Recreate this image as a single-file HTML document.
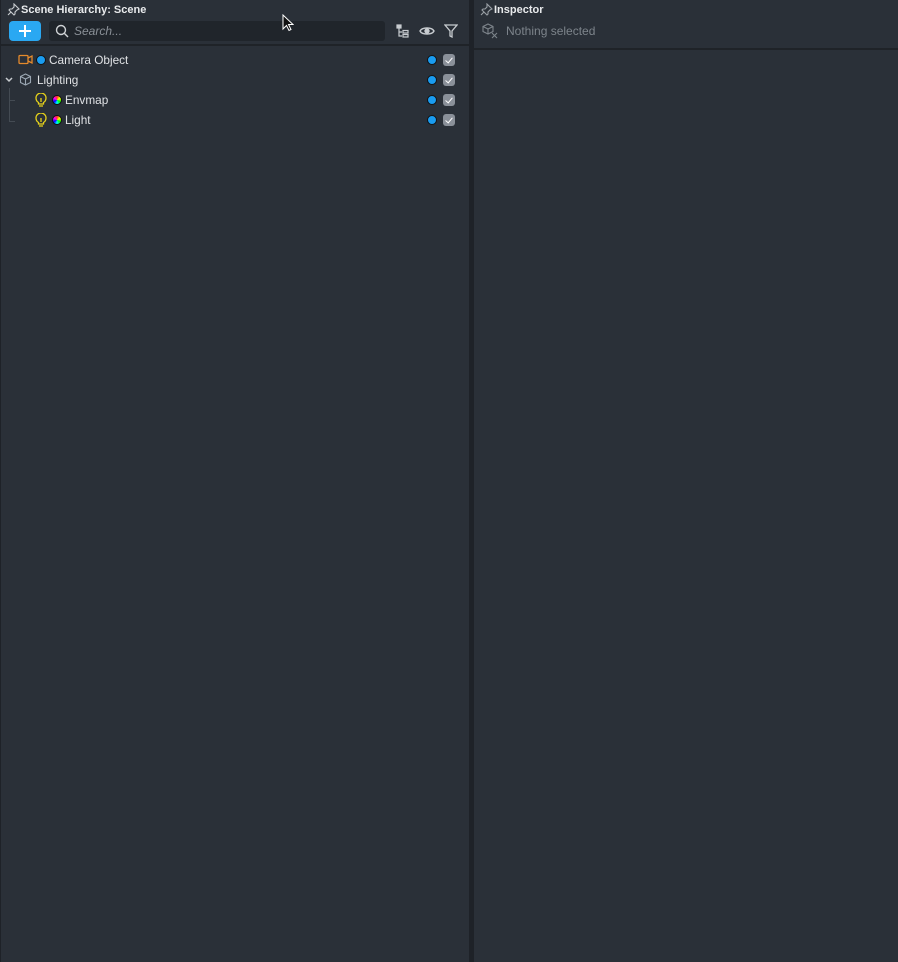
<!DOCTYPE html>
<html><head><style>
*{box-sizing:border-box;margin:0;padding:0}
body{width:898px;height:962px;background:#2a3038;font-family:"Liberation Sans",sans-serif;position:relative;overflow:hidden;color:#e6e8ea}
.div{position:absolute;left:469px;top:0;width:5px;height:962px;background:#1e2228}
.lb{position:absolute;left:0;top:0;width:1px;height:962px;background:#1e2228}
.t{position:absolute;font-size:11px;font-weight:bold;color:#e8eaec}
.sep{position:absolute;height:2px;background:#1f2328}
.row{position:absolute;font-size:11.8px;color:#e0e2e5;height:20px;line-height:20px}
.dot{position:absolute;width:10px;height:10px;border-radius:50%;background:#1a9cf0;border:1px solid #0f1418}
.chk{position:absolute;width:12px;height:12px;border-radius:3px;background:#8a9099}
.chk:after{content:"";position:absolute;left:4px;top:1.5px;width:3px;height:6px;border:solid #fff;border-width:0 1.5px 1.5px 0;transform:rotate(40deg)}
.cw{position:absolute;width:10px;height:10px;border-radius:50%;background:conic-gradient(#f33,#ff0,#0f0,#0ff,#00f,#f0f,#f33);border:1px solid #111}
</style></head><body>
<div class="lb"></div>
<div class="div"></div>
<svg style="position:absolute;left:7px;top:3px" width="13" height="13" viewBox="0 0 13 13" fill="none" stroke="#c8ccd0" stroke-width="1.1"><path d="M7 1l5 5-2 1-2 2 0 2-1 1-5-5 1-1 2 0 2-2z M4 9l-3 3"/></svg>
<div class="t" style="left:21px;top:4px">Scene Hierarchy: Scene</div>
<div style="position:absolute;left:9px;top:21px;width:32px;height:20px;border-radius:4px;background:#2aa8f2"></div>
<div style="position:absolute;left:19px;top:30px;width:12px;height:2px;background:#fff"></div>
<div style="position:absolute;left:24px;top:25px;width:2px;height:12px;background:#fff"></div>
<div style="position:absolute;left:49px;top:21px;width:336px;height:20px;border-radius:3px;background:#20252b"></div>
<svg style="position:absolute;left:55px;top:24px" width="14" height="14" viewBox="0 0 14 14" fill="none" stroke="#d0d3d6" stroke-width="1.4"><circle cx="6" cy="6" r="4.5"/><path d="M9.5 9.5l3.5 3.5"/></svg>
<div style="position:absolute;left:74px;top:24px;font-size:12px;font-style:italic;color:#8a9097">Search...</div>
<svg style="position:absolute;left:396px;top:24px" width="14" height="14" viewBox="0 0 14 14" fill="none" stroke="#c8ccd0" stroke-width="1.2"><rect x="1" y="1" width="4" height="3" fill="#c8ccd0"/><path d="M3 4v8h3M3 8h3"/><rect x="7" y="6.5" width="5" height="2.5"/><rect x="7" y="10.5" width="5" height="2.5"/></svg>
<svg style="position:absolute;left:419px;top:24px" width="16" height="14" viewBox="0 0 16 14" fill="none" stroke="#c8ccd0" stroke-width="1.4"><path d="M1 7C3 3 13 3 15 7 13 11 3 11 1 7z"/><circle cx="8" cy="7" r="2" fill="#c8ccd0"/></svg>
<svg style="position:absolute;left:444px;top:24px" width="14" height="14" viewBox="0 0 14 14" fill="none" stroke="#c8ccd0" stroke-width="1.3"><path d="M1 1h12L8 7v6L6 12V7z"/></svg>
<div class="sep" style="left:1px;top:44px;width:468px"></div>

<svg style="position:absolute;left:18px;top:54px" width="15" height="11" viewBox="0 0 15 11" fill="none" stroke="#e58a2c" stroke-width="1.3"><rect x="1" y="1.5" width="9" height="8" rx="1"/><path d="M10 4l4-2v7l-4-2"/></svg>
<div class="dot" style="left:36px;top:55px"></div>
<div class="row" style="left:49px;top:50px">Camera Object</div>

<svg style="position:absolute;left:4px;top:75px" width="10" height="10" viewBox="0 0 10 10" fill="none" stroke="#c8ccd0" stroke-width="1.5"><path d="M2 3l3 3 3-3"/></svg>
<svg style="position:absolute;left:19px;top:73px" width="13" height="13" viewBox="0 0 13 13" fill="none" stroke="#9aa6b2" stroke-width="1.1"><path d="M6.5 1l5 2.5v6L6.5 12 1.5 9.5v-6z M1.5 3.5L6.5 6l5-2.5M6.5 6v6"/></svg>
<div class="row" style="left:37px;top:70px">Lighting</div>

<div style="position:absolute;left:9px;top:88px;width:1px;height:34px;background:#444b53"></div>
<div style="position:absolute;left:9px;top:100px;width:6px;height:1px;background:#444b53"></div>
<div style="position:absolute;left:9px;top:121px;width:6px;height:1px;background:#444b53"></div>
<svg style="position:absolute;left:35px;top:93px" width="12" height="15" viewBox="0 0 12 15" fill="none" stroke="#e6d21a" stroke-width="1.3"><path d="M3.5 9.5C1 8 1 5.5 1 5a5 5 0 0110 0c0 .5 0 3-2.5 4.5V11h-5z M4 13h4M6 5v4"/></svg>
<div class="cw" style="left:52px;top:95px"></div>
<div class="row" style="left:65px;top:90px">Envmap</div>
<svg style="position:absolute;left:35px;top:113px" width="12" height="15" viewBox="0 0 12 15" fill="none" stroke="#e6d21a" stroke-width="1.3"><path d="M3.5 9.5C1 8 1 5.5 1 5a5 5 0 0110 0c0 .5 0 3-2.5 4.5V11h-5z M4 13h4M6 5v4"/></svg>
<div class="cw" style="left:52px;top:115px"></div>
<div class="row" style="left:65px;top:110px">Light</div>

<div class="dot" style="left:427px;top:55px"></div><div class="chk" style="left:443px;top:54px"></div>
<div class="dot" style="left:427px;top:75px"></div><div class="chk" style="left:443px;top:74px"></div>
<div class="dot" style="left:427px;top:95px"></div><div class="chk" style="left:443px;top:94px"></div>
<div class="dot" style="left:427px;top:115px"></div><div class="chk" style="left:443px;top:114px"></div>

<svg style="position:absolute;left:480px;top:3px" width="13" height="13" viewBox="0 0 13 13" fill="none" stroke="#9aa0a6" stroke-width="1.1"><path d="M7 1l5 5-2 1-2 2 0 2-1 1-5-5 1-1 2 0 2-2z M4 9l-3 3"/></svg>
<div class="t" style="left:494px;top:4px">Inspector</div>
<svg style="position:absolute;left:482px;top:23px" width="16" height="16" viewBox="0 0 16 16" fill="none" stroke="#7d848b" stroke-width="1.1"><path d="M6 1l5 2.5v5L6 11 1 8.5v-5z M1 3.5L6 6l5-2.5M6 6v5 M10 10l5 5M15 10l-5 5"/></svg>
<div style="position:absolute;left:506px;top:24px;font-size:12px;color:#7d848b">Nothing selected</div>
<div class="sep" style="left:474px;top:48px;width:424px"></div>

<svg style="position:absolute;left:282px;top:14px" width="12" height="18" viewBox="0 0 12 18"><path d="M1 1v14l3.5-3.5 2.5 5 2-1-2.5-5H11z" fill="#111" stroke="#fff" stroke-width="1"/></svg>
</body></html>
